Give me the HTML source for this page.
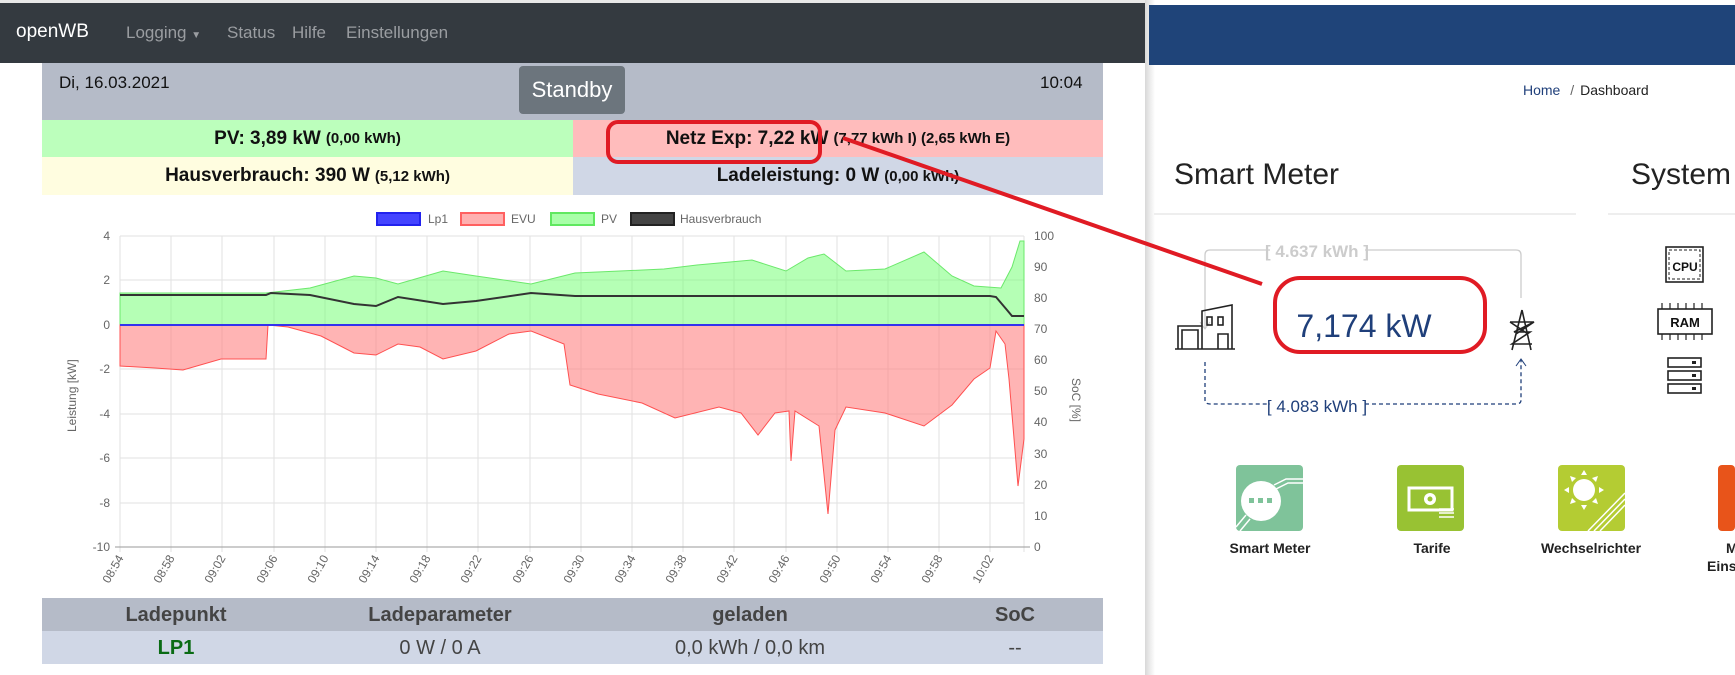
<!DOCTYPE html>
<html><head><meta charset="utf-8"><style>
*{margin:0;padding:0;box-sizing:border-box}
body{width:1735px;height:675px;overflow:hidden;background:#fff;font-family:"Liberation Sans",sans-serif;position:relative}
.a{position:absolute;white-space:nowrap}
.nav{left:0;top:3px;width:1145px;height:60px;background:#343a40}
.nl{color:#9a9da1;font-size:17px;top:23px}
.cell{position:absolute;display:flex;align-items:center;justify-content:center;font-weight:bold;font-size:19px;color:#111}
.cell small{font-size:15px;margin-left:5px}
</style></head><body>
<div class="a" style="left:0;top:0;width:1145px;height:3px;background:#e8e8e8"></div>
<div class="a nav"></div>
<div class="a" style="left:16px;top:21px;color:#fff;font-size:19px">openWB</div>
<div class="a nl" style="left:126px">Logging <span style="font-size:10px">▼</span></div>
<div class="a nl" style="left:227px">Status</div>
<div class="a nl" style="left:292px">Hilfe</div>
<div class="a nl" style="left:346px">Einstellungen</div>

<div class="a" style="left:42px;top:63px;width:1061px;height:57px;background:#b5bbc8"></div>
<div class="a" style="left:59px;top:73px;font-size:17px;color:#111">Di, 16.03.2021</div>
<div class="a" style="left:1040px;top:73px;font-size:17px;color:#111">10:04</div>
<div class="a" style="left:519px;top:66px;width:106px;height:48px;background:#6c757d;border-radius:4px;color:#fff;font-size:22px;display:flex;align-items:center;justify-content:center">Standby</div>
<div class="cell" style="left:42px;top:120px;width:531px;height:37px;background:#bcffbc">PV: 3,89 kW<small>(0,00 kWh)</small></div>
<div class="cell" style="left:573px;top:120px;width:530px;height:37px;background:#ffbcbc">Netz Exp: 7,22 kW<small>(7,77 kWh I) (2,65 kWh E)</small></div>
<div class="cell" style="left:42px;top:157px;width:531px;height:38px;background:#fffde0">Hausverbrauch: 390 W<small>(5,12 kWh)</small></div>
<div class="cell" style="left:573px;top:157px;width:530px;height:38px;background:#d0d7e6">Ladeleistung: 0 W<small>(0,00 kWh)</small></div>

<svg class="a" style="left:0;top:0" width="1145" height="600" font-family="Liberation Sans" font-size="12" fill="#666">
<g stroke="#e2e2e2" stroke-width="1">
<line x1="120" y1="236" x2="1024" y2="236"/><line x1="120" y1="280" x2="1024" y2="280"/><line x1="120" y1="369" x2="1024" y2="369"/><line x1="120" y1="414" x2="1024" y2="414"/><line x1="120" y1="458" x2="1024" y2="458"/><line x1="120" y1="503" x2="1024" y2="503"/>
<line x1="120" y1="236" x2="120" y2="552"/><line x1="171" y1="236" x2="171" y2="552"/><line x1="222" y1="236" x2="222" y2="552"/><line x1="274" y1="236" x2="274" y2="552"/><line x1="325" y1="236" x2="325" y2="552"/><line x1="376" y1="236" x2="376" y2="552"/><line x1="427" y1="236" x2="427" y2="552"/><line x1="478" y1="236" x2="478" y2="552"/><line x1="530" y1="236" x2="530" y2="552"/><line x1="581" y1="236" x2="581" y2="552"/><line x1="632" y1="236" x2="632" y2="552"/><line x1="683" y1="236" x2="683" y2="552"/><line x1="734" y1="236" x2="734" y2="552"/><line x1="786" y1="236" x2="786" y2="552"/><line x1="837" y1="236" x2="837" y2="552"/><line x1="888" y1="236" x2="888" y2="552"/><line x1="939" y1="236" x2="939" y2="552"/><line x1="990" y1="236" x2="990" y2="552"/><line x1="1024" y1="236" x2="1024" y2="552"/>
</g>
<line x1="115" y1="547" x2="1030" y2="547" stroke="#999"/>
<polygon fill="rgba(120,255,120,0.55)" stroke="#6be86b" stroke-width="1" points="120,293 266,293 310,288 354,276 376,278 398,284 443,271 476,276 531,284 575,273 620,271 664,269 697,265 752,260 786,271 808,258 824,254 846,271 885,269 924,252 952,276 974,286 1001,288 1012,267 1020,241 1024,241 1024,325 120,325"/>
<polygon fill="rgba(255,130,130,0.6)" stroke="#ff5050" stroke-width="1" points="120,325 120,366 155,368 183,370 221,359 266,359 268,325 288,327 321,336 354,353 376,355 398,344 420,347 443,359 476,351 509,334 531,331 564,344 570,385 598,394 642,403 675,418 719,407 741,413 758,435 775,413 789,411 791,461 795,411 819,426 828,514 835,430 846,407 885,413 924,426 952,405 974,379 990,368 996,331 1005,344 1009,379 1018,486 1024,439 1024,325"/>
<polyline fill="none" stroke="#333" stroke-width="2" points="120,295 266,295 271,293 310,295 354,304 376,306 398,297 443,304 476,301 531,293 575,296 990,296 996,297 1007,310 1012,316 1024,316"/>
<line x1="120" y1="325" x2="1024" y2="325" stroke="#3333ee" stroke-width="2"/>
<g text-anchor="end"><text x="110" y="240">4</text><text x="110" y="284">2</text><text x="110" y="329">0</text><text x="110" y="373">-2</text><text x="110" y="418">-4</text><text x="110" y="462">-6</text><text x="110" y="507">-8</text><text x="110" y="551">-10</text></g>
<g><text x="1034" y="240">100</text><text x="1034" y="271">90</text><text x="1034" y="302">80</text><text x="1034" y="333">70</text><text x="1034" y="364">60</text><text x="1034" y="395">50</text><text x="1034" y="426">40</text><text x="1034" y="458">30</text><text x="1034" y="489">20</text><text x="1034" y="520">10</text><text x="1034" y="551">0</text></g>
<text transform="translate(76,432) rotate(-90)" font-size="12">Leistung [kW]</text>
<text transform="translate(1072,378) rotate(90)" font-size="12">SoC [%]</text>
<g font-size="12" text-anchor="end">
<text transform="translate(124,558) rotate(-60)">08:54</text><text transform="translate(175,558) rotate(-60)">08:58</text><text transform="translate(226,558) rotate(-60)">09:02</text><text transform="translate(278,558) rotate(-60)">09:06</text><text transform="translate(329,558) rotate(-60)">09:10</text><text transform="translate(380,558) rotate(-60)">09:14</text><text transform="translate(431,558) rotate(-60)">09:18</text><text transform="translate(482,558) rotate(-60)">09:22</text><text transform="translate(534,558) rotate(-60)">09:26</text><text transform="translate(585,558) rotate(-60)">09:30</text><text transform="translate(636,558) rotate(-60)">09:34</text><text transform="translate(687,558) rotate(-60)">09:38</text><text transform="translate(738,558) rotate(-60)">09:42</text><text transform="translate(790,558) rotate(-60)">09:46</text><text transform="translate(841,558) rotate(-60)">09:50</text><text transform="translate(892,558) rotate(-60)">09:54</text><text transform="translate(943,558) rotate(-60)">09:58</text><text transform="translate(994,558) rotate(-60)">10:02</text>
</g>
<rect x="377" y="213" width="43" height="12" fill="#4444ff" stroke="#2222ee" stroke-width="2"/><text x="428" y="223">Lp1</text>
<rect x="461" y="213" width="43" height="12" fill="#ffb0b0" stroke="#ff6060" stroke-width="2"/><text x="511" y="223">EVU</text>
<rect x="551" y="213" width="43" height="12" fill="#a8ffa8" stroke="#60e860" stroke-width="2"/><text x="601" y="223">PV</text>
<rect x="631" y="213" width="43" height="12" fill="#444" stroke="#222" stroke-width="2"/><text x="680" y="223">Hausverbrauch</text>
</svg>

<div class="a" style="left:42px;top:598px;width:1061px;height:33px;background:#b5bbc8"></div>
<div class="a" style="left:42px;top:631px;width:1061px;height:33px;background:#d0d7e6"></div>
<div class="a" style="left:76px;top:604px;width:200px;text-align:center;font-size:20px;font-weight:bold;color:#444">Ladepunkt</div>
<div class="a" style="left:340px;top:604px;width:200px;text-align:center;font-size:20px;font-weight:bold;color:#444">Ladeparameter</div>
<div class="a" style="left:650px;top:604px;width:200px;text-align:center;font-size:20px;font-weight:bold;color:#444">geladen</div>
<div class="a" style="left:965px;top:604px;width:100px;text-align:center;font-size:20px;font-weight:bold;color:#444">SoC</div>
<div class="a" style="left:76px;top:637px;width:200px;text-align:center;font-size:20px;font-weight:bold;color:#0a6b14">LP1</div>
<div class="a" style="left:340px;top:637px;width:200px;text-align:center;font-size:20px;color:#444">0 W / 0 A</div>
<div class="a" style="left:650px;top:637px;width:200px;text-align:center;font-size:20px;color:#444">0,0 kWh / 0,0 km</div>
<div class="a" style="left:965px;top:637px;width:100px;text-align:center;font-size:20px;color:#444">--</div>

<!-- right panel -->
<div class="a" style="left:1145px;top:0;width:10px;height:675px;background:linear-gradient(90deg,#d8d8d8,#fff)"></div>
<div class="a" style="left:1149px;top:5px;width:586px;height:60px;background:#1f4479"></div>
<div class="a" style="left:1523px;top:82px;font-size:14px;color:#1f3f7a">Home <span style="color:#666;margin:0 6px">/</span><span style="color:#222">Dashboard</span></div>
<div class="a" style="left:1174px;top:158px;font-size:30px;color:#222">Smart Meter</div>
<div class="a" style="left:1631px;top:158px;font-size:30px;color:#222">System</div>
<div class="a" style="left:1154px;top:213px;width:422px;height:2px;background:#eee"></div>
<div class="a" style="left:1608px;top:213px;width:127px;height:2px;background:#eee"></div>

<svg class="a" style="left:1150px;top:230px" width="585" height="330" font-family="Liberation Sans">
<path d="M55,99 V25 Q55,20 60,20 H120 M215,20 H366 Q371,20 371,25 V68" fill="none" stroke="#ccc" stroke-width="1.3"/>
<path d="M50,92 L55,99 L60,92" fill="none" stroke="#ccc"/>
<text x="167" y="27" text-anchor="middle" font-size="17" fill="#ccc" font-weight="bold">[ 4.637 kWh ]</text>
<path d="M55,132 V170 Q55,174 60,174 H120 M215,174 H366 Q371,174 371,170 V130" fill="none" stroke="#1f3f7a" stroke-width="1.3" stroke-dasharray="4,3"/>
<path d="M366,136 L371,129 L376,136" fill="none" stroke="#1f3f7a"/>
<text x="167" y="182" text-anchor="middle" font-size="17" fill="#1f3f7a">[ 4.083 kWh ]</text>
<g fill="none" stroke="#222" stroke-width="1.6">
<path d="M25,119 H85 M28,119 V96 H52 M52,119 V81 L82,75 V119 M32,119 V100 H48 V119 M68,119 V104 H78 V119"/>
<rect x="57" y="87" width="5" height="8"/><rect x="68" y="87" width="5" height="8"/>
<path d="M372,80 L362,120 M372,80 L381,120 M360,92 H384 L364,102 H380 L362,114 H382 M360,92 L378,104 M384,92 L366,104"/>
</g>
<rect x="125" y="48" width="210" height="74" rx="25" fill="none" stroke="#e01b24" stroke-width="4"/>
<text x="214" y="107" text-anchor="middle" font-size="32" fill="#1f3f7a">7,174 kW</text>
<g transform="translate(86,235)"><rect width="67" height="66" rx="4" fill="#7fc39a"/><circle cx="25" cy="36" r="20" fill="#fff"/><rect x="13" y="33" width="5" height="5" fill="#7fc39a"/><rect x="22" y="33" width="5" height="5" fill="#7fc39a"/><rect x="31" y="33" width="5" height="5" fill="#7fc39a"/><path d="M38,20 L50,14 H67 M40,24 L52,18 H67 M0,62 L10,50 M4,66 L14,54" stroke="#fff" stroke-width="1.5" fill="none"/></g>
<g transform="translate(247,235)"><rect width="67" height="66" rx="4" fill="#98c233"/><rect x="12" y="23" width="43" height="22" fill="none" stroke="#fff" stroke-width="3"/><circle cx="33" cy="34" r="6" fill="#fff"/><circle cx="33" cy="34" r="2.5" fill="#98c233"/><path d="M42,44 H57 M42,48 H57 M42,52 H57" stroke="#fff" stroke-width="1.5"/></g>
<g transform="translate(408,235)"><rect width="67" height="66" rx="4" fill="#b4cc33"/><circle cx="26" cy="25" r="11" fill="#fff"/><g fill="#fff"><path d="M26,5 l-3,5 h6z M26,45 l-3,-5 h6z M6,25 l5,-3 v6z M46,25 l-5,-3 v6z M12,11 l2,6 4,-4z M40,11 l-6,2 4,4z M12,39 l6,-2 -4,-4z M40,39 l-2,-6 -4,4z"/></g><path d="M30,66 L67,28 M36,66 L67,34 M42,66 L67,40" stroke="#fff" stroke-width="1.5"/></g>
<rect x="568" y="235" width="17" height="66" rx="4" fill="#e8541a"/>
<g fill="none" stroke="#222" stroke-width="1.6"><rect x="516" y="17" width="37" height="35"/><rect x="519" y="20" width="31" height="29" stroke-dasharray="3,2" stroke-width="1"/>
<rect x="508" y="79" width="54" height="25"/><path d="M512,79 v-6 M520,79 v-6 M528,79 v-6 M536,79 v-6 M544,79 v-6 M552,79 v-6 M512,104 v6 M520,104 v6 M528,104 v6 M536,104 v6 M544,104 v6 M552,104 v6" stroke-width="1.2"/>
<rect x="518" y="128" width="33" height="9"/><rect x="518" y="141" width="33" height="9"/><rect x="518" y="154" width="33" height="9"/></g>
<g fill="#222"><rect x="542" y="131" width="4" height="3"/><rect x="542" y="144" width="4" height="3"/><rect x="542" y="157" width="4" height="3"/></g>
<text x="535" y="41" text-anchor="middle" font-size="12" font-weight="bold" fill="#111">CPU</text>
<text x="535" y="97" text-anchor="middle" font-size="13" font-weight="bold" fill="#111">RAM</text>
</svg>
<div class="a" style="left:1218px;top:540px;width:104px;text-align:center;font-size:14px;font-weight:bold;color:#222">Smart Meter</div>
<div class="a" style="left:1380px;top:540px;width:104px;text-align:center;font-size:14px;font-weight:bold;color:#222">Tarife</div>
<div class="a" style="left:1531px;top:540px;width:120px;text-align:center;font-size:14px;font-weight:bold;color:#222">Wechselrichter</div>
<div class="a" style="left:1726px;top:540px;font-size:14px;font-weight:bold;color:#222">M</div>
<div class="a" style="left:1707px;top:558px;font-size:14px;font-weight:bold;color:#222">Eins</div>

<!-- annotation -->
<div class="a" style="left:606px;top:120px;width:216px;height:44px;border:4px solid #e01b24;border-radius:12px"></div>
<svg class="a" style="left:0;top:0" width="1735" height="675"><line x1="843" y1="138" x2="1262" y2="284" stroke="#e01b24" stroke-width="4"/></svg>
</body></html>
